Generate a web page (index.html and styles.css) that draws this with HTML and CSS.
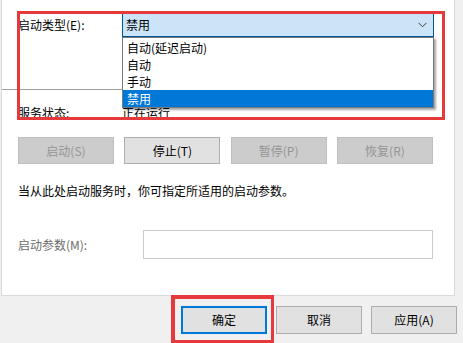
FILE: index.html
```html
<!DOCTYPE html>
<html lang="zh-CN">
<head>
<meta charset="utf-8">
<title>服务属性</title>
<link rel="stylesheet" href="styles.css">
</head>
<body>
<div class="page">
  <div class="panel">
    <div class="row-type">
      <span class="label label-type">启动类型(E):</span>
      <div class="combo">
        <span class="combo-value">禁用</span>
        <svg class="chevron" width="9" height="6" viewBox="0 0 9 6"><polyline points="0.5,0.8 4.5,4.8 8.5,0.8" fill="none" stroke="#404040" stroke-width="1"/></svg>
        <ul class="dropdown">
          <li>自动(延迟启动)</li>
          <li>自动</li>
          <li>手动</li>
          <li class="selected">禁用</li>
        </ul>
      </div>
    </div>
    <div class="separator"></div>
    <div class="row-status">
      <span class="label label-status">服务状态:</span>
      <span class="status-value">正在运行</span>
    </div>
    <div class="actions">
      <button class="btn btn-disabled">启动(S)</button>
      <button class="btn">停止(T)</button>
      <button class="btn btn-disabled">暂停(P)</button>
      <button class="btn btn-disabled">恢复(R)</button>
    </div>
    <p class="hint">当从此处启动服务时，你可指定所适用的启动参数。</p>
    <div class="row-param">
      <span class="label label-param">启动参数(M):</span>
      <div class="param-input"></div>
    </div>
  </div>
  <div class="footer">
    <button class="btn btn-dialog btn-default">确定</button>
    <button class="btn btn-dialog">取消</button>
    <button class="btn btn-dialog">应用(A)</button>
  </div>
  <div class="highlight highlight-top"></div>
  <div class="highlight highlight-ok"></div>
</div>
</body>
</html>
```

FILE: styles.css
```css
* { box-sizing: border-box; }

html, body {
  margin: 0;
  padding: 0;
}

body {
  background: #f0f0f0;
  font-family: "Noto Sans CJK SC", "Microsoft YaHei", sans-serif;
  font-size: 12px;
  color: #000;
}

.page {
  position: relative;
  width: 463px;
  height: 343px;
  overflow: hidden;
}

.panel {
  margin-left: 1px;
  width: 454px;
  height: 296px;
  background: #fff;
  border-left: 1px solid #dadada;
  border-right: 1px solid #dadada;
  border-bottom: 1px solid #dadada;
  padding: 13px 0 0 16px;
}

.label {
  display: block;
  line-height: 18px;
  white-space: nowrap;
}

.row-type {
  display: flex;
  align-items: center;
  height: 24px;
}

.label-type {
  width: 104px;
}

.combo {
  position: relative;
  width: 312px;
  height: 24px;
  background: #cce4f7;
  border: 1px solid #005499;
  display: flex;
  align-items: center;
  padding-left: 3px;
}

.combo-value {
  line-height: 18px;
  flex: 1;
}

.chevron {
  margin-right: 6px;
}

.dropdown {
  position: absolute;
  left: -1px;
  top: 23px;
  width: 312px;
  margin: 0;
  padding: 1px 0 0;
  list-style: none;
  background: #fff;
  border: 1px solid #7a7a7a;
  box-shadow: 2px 2px 2px rgba(0, 0, 0, 0.35);
  z-index: 2;
}

.dropdown li {
  height: 17px;
  line-height: 17px;
  padding-left: 4px;
}

.dropdown li.selected {
  background: #0078d7;
  color: #fff;
}

.separator {
  margin-top: 52px;
  width: 432px;
  margin-left: -16px;
  height: 1px;
  background: #a0a0a0;
}

.row-status {
  display: flex;
  margin-top: 14px;
  height: 18px;
}

.label-status {
  width: 104px;
}

.status-value {
  line-height: 18px;
}

.actions {
  display: flex;
  justify-content: space-between;
  width: 415px;
  margin-top: 15px;
}

.btn {
  font-family: inherit;
  font-size: 12px;
  color: #000;
  background: #e1e1e1;
  border: 1px solid #adadad;
  padding: 0;
  margin: 0;
  width: 96px;
  height: 27px;
  line-height: 18px;
}

.btn-disabled {
  background: #cccccc;
  border-color: #bfbfbf;
  color: #959595;
}

.hint {
  margin: 18px 0 0;
  line-height: 18px;
}

.row-param {
  display: flex;
  align-items: center;
  margin-top: 30px;
}

.label-param {
  width: 125px;
  color: #6d6d6d;
}

.param-input {
  width: 290px;
  height: 29px;
  background: #fff;
  border: 1px solid #cccccc;
}

.footer {
  display: flex;
  gap: 9px;
  padding: 10px 0 0 181px;
}

.btn-dialog {
  width: 86px;
  height: 28px;
}

.btn-default {
  border: 2px solid #0078d7;
}

.highlight {
  position: absolute;
  border: 3px solid #e5393b;
  z-index: 5;
  pointer-events: none;
}

.highlight-top {
  left: 17px;
  top: 11px;
  width: 428px;
  height: 109px;
}

.highlight-ok {
  left: 171px;
  top: 295px;
  width: 103px;
  height: 48px;
  border-width: 4px 3px 3px 4px;
}
```
